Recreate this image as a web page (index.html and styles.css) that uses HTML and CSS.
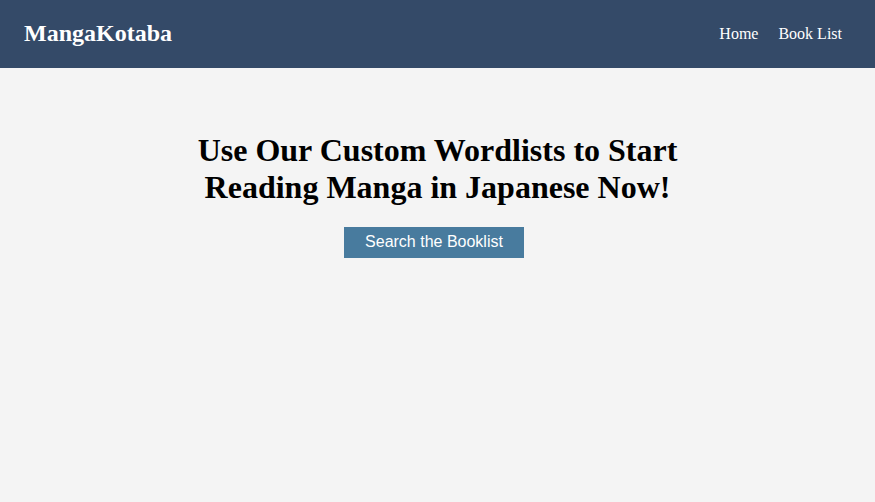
FILE: index.html
```html
<!DOCTYPE html>
<html>
<head>
<meta charset="utf-8">
<link rel="stylesheet" href="styles.css">
</head>
<body>
<header class="topbar">
  <div class="logo">MangaKotaba</div>
  <nav class="nav">
    <a href="#" class="nav-link">Home</a>
    <a href="#" class="nav-link">Book List</a>
  </nav>
</header>
<main class="hero">
  <h1 class="hero-title">Use Our Custom Wordlists to Start Reading Manga in Japanese Now!</h1>
  <a href="#" class="hero-btn">Search the Booklist</a>
</main>
</body>
</html>
```
FILE: styles.css
```css
html, body {
  margin: 0;
  padding: 0;
  height: 100%;
}
body {
  background: #f4f4f4;
  font-family: "Liberation Serif", "Times New Roman", serif;
  color: #000;
}
.topbar {
  height: 68px;
  background: #344a68;
  display: flex;
  align-items: center;
  justify-content: space-between;
  padding: 0 33px 0 24px;
}
.logo {
  color: #fff;
  font-weight: bold;
  font-size: 24px;
  margin-bottom: 2px;
}
.nav {
  display: flex;
  gap: 20px;
}
.nav-link {
  color: #fff;
  text-decoration: none;
  font-size: 16px;
}
.hero {
  display: flex;
  flex-direction: column;
  align-items: center;
  padding-top: 64px;
}
.hero-title {
  width: 520px;
  margin: 0 0 21px;
  text-align: center;
  font-size: 32px;
  font-weight: bold;
  line-height: 37px;
}
.hero-btn {
  display: block;
  width: 180px;
  height: 31px;
  line-height: 30px;
  margin-right: 7px;
  background: #487b9e;
  color: #fff;
  text-align: center;
  text-decoration: none;
  font-family: "Liberation Sans", Arial, sans-serif;
  font-size: 16px;
}
```
